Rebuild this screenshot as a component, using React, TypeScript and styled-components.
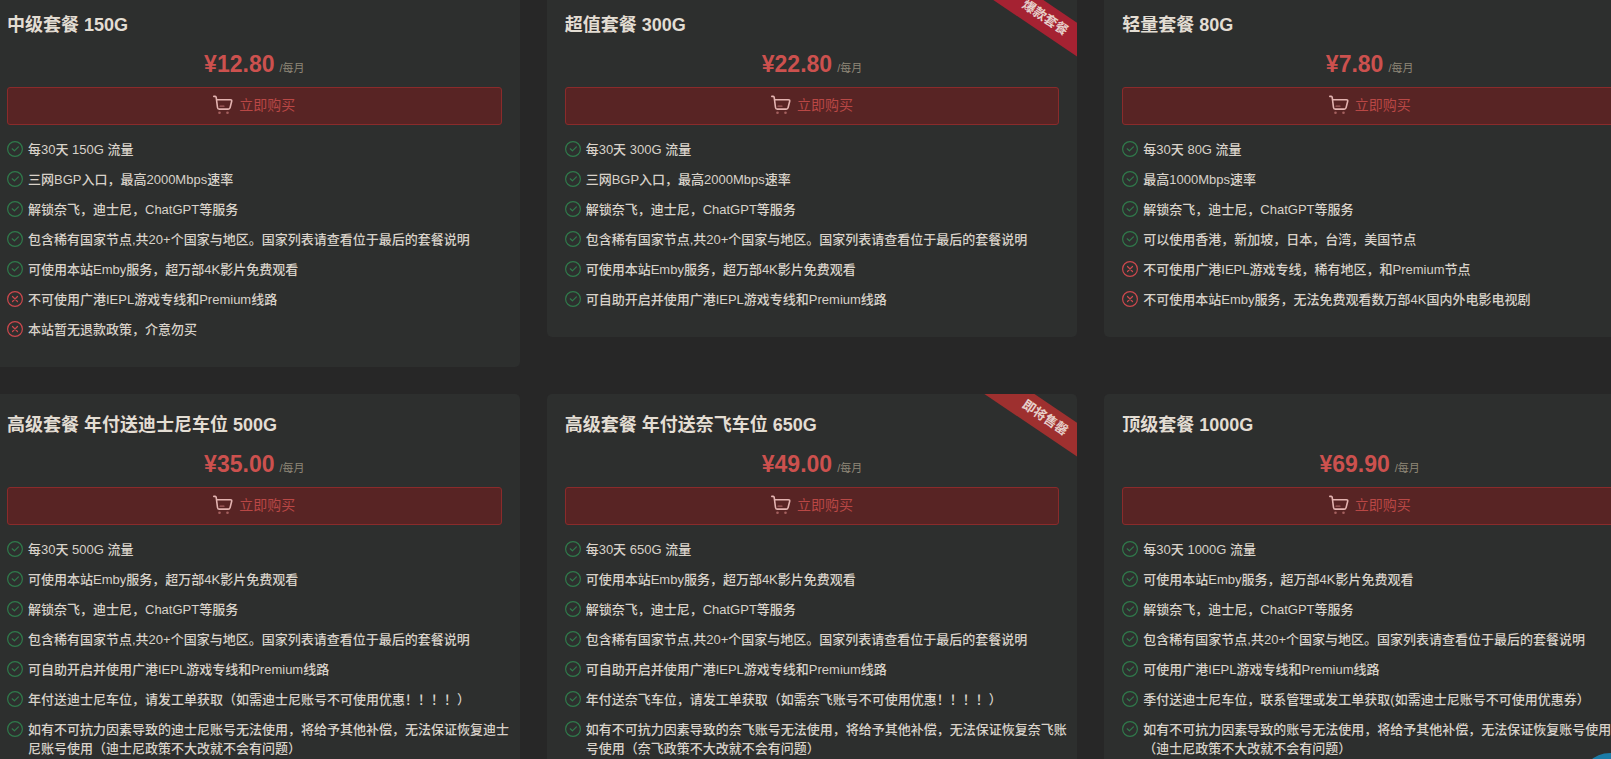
import React from "react";
import styled, { createGlobalStyle } from "styled-components";

const GlobalStyle = createGlobalStyle`
  * { box-sizing: border-box; }
  body {
    margin: 0;
    background: #272727;
    color: #d8d2c9;
    font-family: "Liberation Sans", "Noto Sans CJK SC", sans-serif;
  }
`;

const Page = styled.main`
  height: 100vh;
  overflow: hidden;
`;

const PlanGrid = styled.div`
  display: grid;
  grid-template-columns: repeat(3, 1fr);
  align-items: start;
  gap: 27px;
  margin: -6px -24px 0 -11px;
`;

const Card = styled.section`
  position: relative;
  overflow: hidden;
  padding: 18px 18px 17px;
  border-radius: 5px;
  background: #2d2f2e;
`;

const Title = styled.h2`
  margin: 0 0 9px;
  font-size: 18px;
  line-height: 26px;
  font-weight: 700;
  color: #e3ddd3;
`;

const PriceRow = styled.div`
  display: flex;
  justify-content: center;
  align-items: baseline;
  gap: 5px;
  height: 34px;
  margin-bottom: 6px;
  line-height: 34px;
`;

const Price = styled.strong`
  font-size: 23px;
  color: #cc514e;
`;

const Period = styled.span`
  font-size: 11px;
  color: #8f8778;
`;

const BuyButton = styled.button`
  display: flex;
  justify-content: center;
  align-items: center;
  gap: 6px;
  width: 100%;
  height: 38px;
  padding: 0 0 2px;
  border: 1px solid #8a2b2b;
  border-radius: 3px;
  background: #582424;
  color: #b94745;
  font: 400 14px/20px "Liberation Sans", "Noto Sans CJK SC", sans-serif;
  cursor: pointer;
`;

const FeatureList = styled.ul`
  list-style: none;
  margin: 15px -12px 0 0;
  padding: 0;
`;

const Feature = styled.li`
  display: flex;
  gap: 5px;
  margin-bottom: 11px;
  font-size: 13px;
  line-height: 19px;
  font-weight: 500;

  svg {
    flex: none;
    margin-top: 1px;
  }
`;

const Ribbon = styled.span<{ $color: string }>`
  position: absolute;
  top: 10px;
  right: -58px;
  width: 180px;
  transform: rotate(34deg);
  background: ${(p) => p.$color};
  color: #e6cfca;
  font-size: 13px;
  line-height: 28px;
  font-weight: 700;
  text-align: center;
`;

const ChatButton = styled.button`
  position: fixed;
  right: -29px;
  bottom: -54px;
  width: 60px;
  height: 60px;
  padding: 0;
  border: 0;
  border-radius: 50%;
  background: #1b7ba6;
  cursor: pointer;
`;

const CartIcon = () => (
  <svg width="20" height="20" viewBox="0 0 20 20" fill="none" strokeLinecap="round" strokeLinejoin="round" aria-hidden="true">
    <path
      d="M.8 1.4h1.400c.6 0 .9.3 1 .9l1.300 10.200c.1 1 .7 1.600 1.700 1.600h9c1 0 1.700-.6 1.900-1.500l1.600-6.300c.2-1-.3-1.600-1.300-1.600H3.700"
      stroke="#e3b3b0"
      strokeWidth="1.600"
    />
    <path d="M7 11.200h4" stroke="#a5605f" strokeWidth="1.200" />
    <circle cx="6.500" cy="17.800" r="1.300" fill="#a5605f" />
    <circle cx="14.500" cy="17.800" r="1.300" fill="#a5605f" />
  </svg>
);

const StatusIcon = ({ included }: { included: boolean }) => (
  <svg
    width="16"
    height="16"
    viewBox="0 0 16 16"
    fill="none"
    stroke={included ? "#307a4b" : "#cc484d"}
    strokeWidth="1.200"
    strokeLinecap="round"
    strokeLinejoin="round"
    role="img"
    aria-label={included ? "包含" : "不包含"}
  >
    <circle cx="8" cy="8" r="7.400" />
    {included ? <path d="M5.200 7.800l2.200 2 4-4" /> : <path d="M5.500 5.500l5 5m0-5l-5 5" />}
  </svg>
);

type Plan = {
  name: string;
  price: string;
  features: string[];
  excluded?: string[];
  ribbon?: { text: string; color: string };
};

const emby = "可使用本站Emby服务，超万部4K影片免费观看";
const unlock = "解锁奈飞，迪士尼，ChatGPT等服务";
const nodes = "包含稀有国家节点,共20+个国家与地区。国家列表请查看位于最后的套餐说明";
const bgp = "三网BGP入口，最高2000Mbps速率";
const iepl = "可自助开启并使用广港IEPL游戏专线和Premium线路";

const plans: Plan[] = [
  {
    name: "中级套餐 150G",
    price: "12.80",
    features: ["每30天 150G 流量", bgp, unlock, nodes, emby],
    excluded: ["不可使用广港IEPL游戏专线和Premium线路", "本站暂无退款政策，介意勿买"],
  },
  {
    name: "超值套餐 300G",
    price: "22.80",
    features: ["每30天 300G 流量", bgp, unlock, nodes, emby, iepl],
    ribbon: { text: "爆款套餐", color: "#a52232" },
  },
  {
    name: "轻量套餐 80G",
    price: "7.80",
    features: [
      "每30天 80G 流量",
      "最高1000Mbps速率",
      unlock,
      "可以使用香港，新加坡，日本，台湾，美国节点",
    ],
    excluded: [
      "不可使用广港IEPL游戏专线，稀有地区，和Premium节点",
      "不可使用本站Emby服务，无法免费观看数万部4K国内外电影电视剧",
    ],
  },
  {
    name: "高级套餐 年付送迪士尼车位 500G",
    price: "35.00",
    features: [
      "每30天 500G 流量",
      emby,
      unlock,
      nodes,
      iepl,
      "年付送迪士尼车位，请发工单获取（如需迪士尼账号不可使用优惠！！！！）",
      "如有不可抗力因素导致的迪士尼账号无法使用，将给予其他补偿，无法保证恢复迪士尼账号使用（迪士尼政策不大改就不会有问题）",
    ],
  },
  {
    name: "高级套餐 年付送奈飞车位 650G",
    price: "49.00",
    features: [
      "每30天 650G 流量",
      emby,
      unlock,
      nodes,
      iepl,
      "年付送奈飞车位，请发工单获取（如需奈飞账号不可使用优惠！！！！）",
      "如有不可抗力因素导致的奈飞账号无法使用，将给予其他补偿，无法保证恢复奈飞账号使用（奈飞政策不大改就不会有问题）",
    ],
    ribbon: { text: "即将售罄", color: "#9e302f" },
  },
  {
    name: "顶级套餐 1000G",
    price: "69.90",
    features: [
      "每30天 1000G 流量",
      emby,
      unlock,
      nodes,
      "可使用广港IEPL游戏专线和Premium线路",
      "季付送迪士尼车位，联系管理或发工单获取(如需迪士尼账号不可使用优惠券）",
      "如有不可抗力因素导致的账号无法使用，将给予其他补偿，无法保证恢复账号使用（迪士尼政策不大改就不会有问题）",
    ],
  },
];

const PlanCard = ({ plan }: { plan: Plan }) => (
  <Card>
    <Title>{plan.name}</Title>
    <PriceRow>
      <Price>¥{plan.price}</Price>
      <Period>/每月</Period>
    </PriceRow>
    <BuyButton type="button">
      <CartIcon />
      立即购买
    </BuyButton>
    <FeatureList>
      {plan.features.map((text) => (
        <Feature key={text}>
          <StatusIcon included />
          <span>{text}</span>
        </Feature>
      ))}
      {plan.excluded?.map((text) => (
        <Feature key={text}>
          <StatusIcon included={false} />
          <span>{text}</span>
        </Feature>
      ))}
    </FeatureList>
    {plan.ribbon && <Ribbon $color={plan.ribbon.color}>{plan.ribbon.text}</Ribbon>}
  </Card>
);

export default function App() {
  return (
    <Page lang="zh-CN">
      <GlobalStyle />
      <PlanGrid>
        {plans.map((plan) => (
          <PlanCard key={plan.name} plan={plan} />
        ))}
      </PlanGrid>
      <ChatButton type="button" aria-label="在线客服" />
    </Page>
  );
}
